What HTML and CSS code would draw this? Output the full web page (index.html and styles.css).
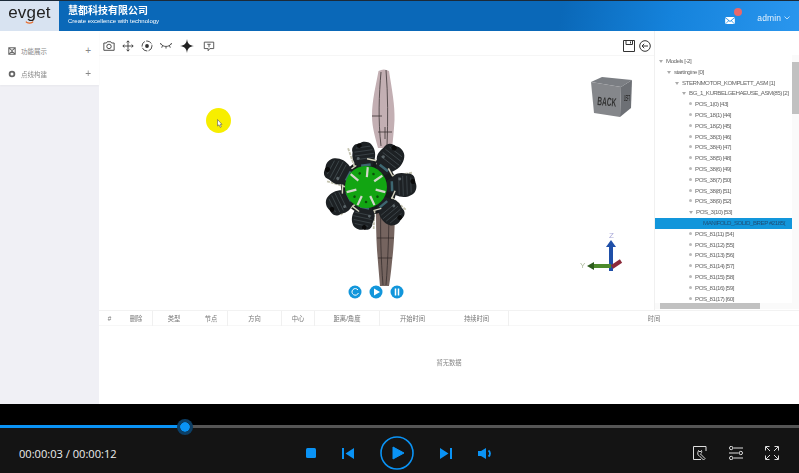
FILE: index.html
```html
<!DOCTYPE html>
<html lang="zh-CN">
<head>
    <meta charset="UTF-8">
    <meta name="viewport" content="width=device-width, initial-scale=1.0">
    <title>慧都科技有限公司</title>
    <link rel="stylesheet" href="styles.css">
</head>
<body>
    <header class="top-bar">
        <div class="logo-box">
            <span class="logo-text">evget</span>
            <svg class="logo-smile" viewBox="0 0 10 3"><path d="M1 .5C2.500 2.800 7.500 2.800 9 .5" fill="none" stroke="#e8641e" stroke-width="1.300"/></svg>
        </div>
        <div class="brand">
            <div class="brand-name">慧都科技有限公司</div>
            <div class="brand-sub">Create excellence with technology</div>
        </div>
        <div class="user-area">
            <div class="mail">
                <svg class="mail-icon" viewBox="0 0 11 8"><path d="M0 0H11L5.500 4.500Z M0 1.200V8L3.600 4Z M11 1.200V8L7.400 4Z M.6 8H10.400L6.800 4.700 5.500 5.800 4.200 4.700Z" fill="#fff"/></svg>
                <span class="badge"></span>
            </div>
            <span class="user-name">admin</span>
            <svg class="caret" viewBox="0 0 6 4"><path d="M.5 .5 3 3 5.500 .5" fill="none" stroke="#cfe6fa" stroke-width=".9"/></svg>
        </div>
    </header>

    <div class="app">
        <aside class="sidebar">
            <ul class="menu">
                <li class="menu-item">
                    <svg class="menu-icon" viewBox="0 0 10 10"><path d="M1 1H9V9H1Z M1 1 5 4.500 9 1 M1 9 5 5.500 9 9" fill="none" stroke="#666" stroke-width="1.300"/></svg>
                    <span class="menu-label">功能展示</span>
                    <span class="menu-plus">+</span>
                </li>
                <li class="menu-item">
                    <svg class="menu-icon" viewBox="0 0 10 10"><circle cx="5" cy="5" r="3" fill="none" stroke="#666" stroke-width="2.200"/></svg>
                    <span class="menu-label">点线构建</span>
                    <span class="menu-plus">+</span>
                </li>
            </ul>
        </aside>

        <main class="content">
            <div class="work-area">
                <section class="viewer">
                    <div class="toolbar">
                        <div class="tool-group">
                            <svg class="tool" viewBox="0 0 14 14"><path d="M1 3.500H4L5 2H9L10 3.500H13V12H1Z" fill="none" stroke="#333" stroke-width="1"/><circle cx="7" cy="7.500" r="2.600" fill="none" stroke="#333" stroke-width="1"/></svg>
                            <svg class="tool" viewBox="0 0 14 14"><path d="M7 1V13M1 7H13M5.300 2.800 7 1 8.700 2.800M5.300 11.200 7 13 8.700 11.200M2.800 5.300 1 7 2.800 8.700M11.200 5.300 13 7 11.200 8.700" fill="none" stroke="#333" stroke-width="1"/></svg>
                            <svg class="tool" viewBox="0 0 14 14"><circle cx="7" cy="7" r="5.800" fill="none" stroke="#333" stroke-width="1" stroke-dasharray="7 1.500"/><circle cx="7" cy="7" r="2.200" fill="#333"/></svg>
                            <svg class="tool" viewBox="0 0 14 14"><path d="M1 4.500C3.500 8.500 10.500 8.500 13 4.500M3 6.500 2 9M7 8V10M11 6.500 12 9M.5 5 1 3.500M13.500 5 13 3.500" fill="none" stroke="#333" stroke-width="1"/></svg>
                            <svg class="tool tool-star" viewBox="0 0 14 14"><path d="M7 0C7.500 4.500 9.500 6.500 14 7 9.500 7.500 7.500 9.500 7 14 6.500 9.500 4.500 7.500 0 7 4.500 6.500 6.500 4.500 7 0Z" fill="#222"/></svg>
                            <svg class="tool tool-note" viewBox="0 0 14 14"><path d="M1.500 2.500H12.500V10H8L6 12.500V10H1.500Z" fill="none" stroke="#444" stroke-width="1"/><path d="M5 5H9M7 5V8.500" fill="none" stroke="#444" stroke-width="1"/></svg>
                        </div>
                        <div class="tool-group-right">
                            <svg class="tool" viewBox="0 0 12 12"><path d="M.5 .5H11.500V11.500H.5Z" fill="none" stroke="#333" stroke-width="1"/><path d="M3 .5V4.500H9.500V.5M7.500 1.500V3.500" fill="none" stroke="#333" stroke-width="1"/></svg>
                            <svg class="tool" viewBox="0 0 12 12"><circle cx="6" cy="6" r="5.300" fill="none" stroke="#333" stroke-width="1"/><path d="M9 6H3M5.200 3.800 3 6 5.200 8.200" fill="none" stroke="#333" stroke-width="1"/></svg>
                        </div>
                    </div>

                    <svg class="scene" viewBox="100 56 554 252">
                        <defs>
                            <g id="cyl">
                                <path d="M-9 -24 C-14 -28 -13 -34 -12 -38 C-13 -44 -8 -47 -4 -46 C0 -49 7 -47 9 -43 C12 -38 12 -32 9 -26 L5 -18 H-6Z" fill="#1d2124"/>
                                <path d="M-8 -42H7M-10 -38H9M-10 -34H10M-9 -30H9" stroke="#3f484c" stroke-width=".8"/>
                                <path d="M-5 -23H5" stroke="#3d6670" stroke-width="2.500"/>
                                <path d="M-10 -24 L-18 -20" stroke="#d6d4c0" stroke-width="1.400"/>
                                <path d="M11 -22 L24 -36" stroke="#c4c3b0" stroke-width="1.800" stroke-dasharray="3 1"/>
                                <circle cx="-4" cy="-44" r="2.500" fill="#0a0a0a"/>
                                <circle cx="-7" cy="-31" r="1.500" fill="#5a6468"/>
                            </g>
                            <path id="spoke" d="M0 -10V-20" stroke="#d3d5cb" stroke-width="2.200"/>
                            <circle id="bolt" cx="0" cy="-15" r="1.300" fill="#0a4f0a"/>
                        </defs>

                        <!-- blades -->
                        <path d="M378.500 71 Q384 68 389 71 C392 90 395 105 394.500 120 C394 130 393 140 392 148 H378 C376 140 372 128 372 116 C372 100 376 85 378.500 71Z" fill="#c3afb3"/>
                        <path d="M381 72C379 95 378 120 381 146M386 70C388 95 388 120 387 146M372 116H382M378 132H392M385 127V139" stroke="#3a3234" stroke-width=".8" fill="none"/>
                        <path d="M376 204 H395 C395 225 394 245 392 262 C391 272 390 280 389 286 H380 C379 275 378 262 377 250 C376 235 376 220 376 204Z" fill="#75645f"/>
                        <path d="M381 206C380 230 381 260 383 285M389 206C389 230 388 260 386 285M377 238H394M378 258H392" stroke="#2e2726" stroke-width=".7" fill="none"/>

                        <!-- engine -->
                        <g transform="translate(369 187)">
                            <circle r="28" fill="#16191b"/>
                            <use href="#cyl" transform="rotate(-8) scale(.96)"/>
                            <use href="#cyl" transform="rotate(38) scale(1.050)"/>
                            <use href="#cyl" transform="rotate(88) scale(1)"/>
                            <use href="#cyl" transform="rotate(140) scale(.98)"/>
                            <use href="#cyl" transform="rotate(192) scale(.92)"/>
                            <use href="#cyl" transform="rotate(244) scale(.98)"/>
                            <use href="#cyl" transform="rotate(298) scale(1.020)"/>
                        </g>
                        <g transform="translate(366 187)">
                            <circle r="21" fill="#12a512"/>
                            <use href="#spoke" transform="rotate(5)"/>
                            <use href="#spoke" transform="rotate(55)"/>
                            <use href="#spoke" transform="rotate(105)"/>
                            <use href="#spoke" transform="rotate(155)"/>
                            <use href="#spoke" transform="rotate(205)"/>
                            <use href="#spoke" transform="rotate(255)"/>
                            <use href="#spoke" transform="rotate(310)"/>
                            <use href="#bolt" transform="rotate(30)"/>
                            <use href="#bolt" transform="rotate(130)"/>
                            <use href="#bolt" transform="rotate(180)"/>
                            <use href="#bolt" transform="rotate(230)"/>
                            <use href="#bolt" transform="rotate(335)"/>
                        </g>

                        <!-- view cube -->
                        <path d="M591 82 L602 77 L632 80 L621 87Z" fill="#7b7e83"/>
                        <path d="M591 82 L621 87 L620 117 L594 113Z" fill="#85878b"/>
                        <path d="M621 87 L632 80 L631 108 L620 117Z" fill="#6d7075"/>
                        <text class="cube-text" x="597" y="105" textLength="19" lengthAdjust="spacingAndGlyphs" transform="rotate(5 597 105)">BACK</text>
                        <text class="cube-side" x="624" y="101" textLength="6" lengthAdjust="spacingAndGlyphs">LEFT</text>

                        <!-- axes -->
                        <path d="M611 271V245" stroke="#1f4fa8" stroke-width="4"/>
                        <path d="M606 247 611 240 616 247Z" fill="#1f4fa8"/>
                        <path d="M611 266H592" stroke="#4c8a2c" stroke-width="4"/>
                        <path d="M594 262 587 266 594 270Z" fill="#2c5c1c"/>
                        <path d="M612 267 621 261" stroke="#8c2a3a" stroke-width="4"/>
                        <text class="axis-z" x="609" y="238">Z</text>
                        <text class="axis-y" x="580" y="268">Y</text>

                        <!-- play controls -->
                        <circle cx="355" cy="292" r="6.500" fill="#1296db"/>
                        <path d="M358 290A3.300 3.300 0 1 0 358.400 293" fill="none" stroke="#fff" stroke-width="1"/>
                        <circle cx="376" cy="292" r="6.500" fill="#1296db"/>
                        <path d="M374 288.500 380 292 374 295.500Z" fill="#fff"/>
                        <circle cx="397" cy="292" r="6.500" fill="#1296db"/>
                        <path d="M395.500 288.500V295.500M398.500 288.500V295.500" stroke="#fff" stroke-width="1.500"/>
                    </svg>

                    <div class="pointer-spot">
                        <svg class="pointer" viewBox="0 0 6 9"><path d="M.5 .5V7L2 5.800 3.200 8.300 4.300 7.800 3.200 5.400H5Z" fill="#fff" stroke="#555" stroke-width=".6"/></svg>
                    </div>
                </section>

                <aside class="tree-panel">
                    <div class="tree-body">
                        <ul class="tree">
                            <li class="row lv0"><i class="open"></i>Models [-2]</li>
                            <li class="row lv1"><i class="open"></i>startingine [0]</li>
                            <li class="row lv2"><i class="open"></i>STERNMOTOR_KOMPLETT_ASM [1]</li>
                            <li class="row lv3"><i class="open"></i>BG_1_KURBELGEHAEUSE_ASM(85) [2]</li>
                            <li class="row lv4"><i></i>POS_1(0) [43]</li>
                            <li class="row lv4"><i></i>POS_18(1) [44]</li>
                            <li class="row lv4"><i></i>POS_18(2) [45]</li>
                            <li class="row lv4"><i></i>POS_38(3) [46]</li>
                            <li class="row lv4"><i></i>POS_38(4) [47]</li>
                            <li class="row lv4"><i></i>POS_38(5) [48]</li>
                            <li class="row lv4"><i></i>POS_38(6) [49]</li>
                            <li class="row lv4"><i></i>POS_38(7) [50]</li>
                            <li class="row lv4"><i></i>POS_38(8) [51]</li>
                            <li class="row lv4"><i></i>POS_38(9) [52]</li>
                            <li class="row lv4"><i class="open"></i>POS_3(10) [53]</li>
                            <li class="row lv5 selected">MANIFOLD_SOLID_BREP #2185(</li>
                            <li class="row lv4"><i></i>POS_81(11) [54]</li>
                            <li class="row lv4"><i></i>POS_81(12) [55]</li>
                            <li class="row lv4"><i></i>POS_81(13) [56]</li>
                            <li class="row lv4"><i></i>POS_81(14) [57]</li>
                            <li class="row lv4"><i></i>POS_81(15) [58]</li>
                            <li class="row lv4"><i></i>POS_81(16) [59]</li>
                            <li class="row lv4"><i></i>POS_81(17) [60]</li>
                        </ul>
                        <div class="v-scroll">
                            <span class="v-thumb"></span>
                        </div>
                    </div>
                    <div class="h-scroll">
                        <span class="h-thumb"></span>
                    </div>
                </aside>
            </div>

            <section class="steps">
                <div class="steps-head">
                    <span class="cell">#</span>
                    <span class="cell sep">删除</span>
                    <span class="cell">类型</span>
                    <span class="cell sep">节点</span>
                    <span class="cell sep">方向</span>
                    <span class="cell sep">中心</span>
                    <span class="cell sep">距离/角度</span>
                    <span class="cell">开始时间</span>
                    <span class="cell sep">持续时间</span>
                    <span class="cell">时间</span>
                </div>
                <div class="steps-empty">暂无数据</div>
            </section>
        </main>
    </div>

    <footer class="player">
        <div class="player-gap"></div>
        <div class="progress">
            <span class="progress-done"></span>
            <span class="progress-knob"></span>
        </div>
        <div class="controls">
            <span class="time">00:00:03 / 00:00:12</span>
            <div class="transport">
                <svg class="ctl-stop" viewBox="0 0 10 10"><rect width="10" height="10" rx="1.500" fill="#0a93f5"/></svg>
                <svg class="ctl-skip" viewBox="0 0 12 11"><path d="M0 0H2V11H0ZM12 0V11L3.500 5.500Z" fill="#0a93f5"/></svg>
                <svg class="ctl-play" viewBox="0 0 34 34"><circle cx="17" cy="17" r="16" fill="none" stroke="#0a93f5" stroke-width="1.600"/><path d="M13 11 24 17 13 23Z" fill="#0a93f5" stroke="#0a93f5" stroke-linejoin="round"/></svg>
                <svg class="ctl-skip" viewBox="0 0 12 11"><path d="M12 0H10V11H12ZM0 0V11L8.500 5.500Z" fill="#0a93f5"/></svg>
                <svg class="ctl-vol" viewBox="0 0 14 11"><path d="M0 3H3L8 0V11L3 8H0Z" fill="#0a93f5"/><path d="M10.500 2.500C12.500 4 12.500 7 10.500 8.500" fill="none" stroke="#0a93f5" stroke-width="1.800"/></svg>
            </div>
            <div class="tools">
                <svg class="ctl-tool" viewBox="0 0 14 14"><path d="M13 5V.5H.5V13.500H8" fill="none" stroke="#ddd" stroke-width="1"/><path d="M5.500 4.500 7 6 8.500 4.500C9 6 8.500 7.500 7.500 8L12 12.500 10.500 14 6 9.500C5 9.500 4 8 5.500 4.500Z" fill="none" stroke="#ddd" stroke-width="1"/></svg>
                <svg class="ctl-tool" viewBox="0 0 14 14"><path d="M4.500 2H14M0 7H9.500M4.500 12H14" stroke="#ddd" stroke-width="1"/><circle cx="2.200" cy="2" r="1.700" fill="none" stroke="#ddd"/><circle cx="11.800" cy="7" r="1.700" fill="none" stroke="#ddd"/><circle cx="2.200" cy="12" r="1.700" fill="none" stroke="#ddd"/></svg>
                <svg class="ctl-tool" viewBox="0 0 14 14"><path d="M.5 4.500V.5H4.500M9.500 .5H13.500V4.500M13.500 9.500V13.500H9.500M4.500 13.500H.5V9.500M1 1 5 5M13 1 9 5M13 13 9 9M1 13 5 9" fill="none" stroke="#ddd" stroke-width="1"/></svg>
            </div>
        </div>
    </footer>
</body>
</html>
```

FILE: styles.css
```css
* {
    box-sizing: border-box;
}

body {
    margin: 0;
    height: 473px;
    overflow: hidden;
    display: flex;
    flex-direction: column;
    font-family: "Liberation Sans", "Noto Sans CJK SC", sans-serif;
    background-color: #fff;
}

ul {
    list-style: none;
    margin: 0;
    padding: 0;
}

svg {
    display: block;
}

/* header */
.top-bar {
    display: flex;
    height: 31px;
    border-top: 1px solid #1c2a38;
    background: linear-gradient(100deg, #0a68b8 0%, #0a68b8 70%, #1583dc 84%, #2a96ee 100%);
    color: #fff;
    filter: blur(.3px);
}

.logo-box {
    width: 59px;
    background-color: #d8e3f1;
    display: flex;
    flex-direction: column;
    align-items: center;
    padding-top: 3px;
}

.logo-text {
    font-size: 17px;
    line-height: 17px;
    color: #222;
    letter-spacing: .2px;
}

.logo-smile {
    width: 9px;
    height: 3px;
}

.brand {
    padding: 3px 0 0 9px;
}

.brand-name {
    font-size: 10px;
    line-height: 13px;
    font-weight: bold;
}

.brand-sub {
    font-size: 6px;
    line-height: 8px;
}

.user-area {
    margin-left: auto;
    display: flex;
    align-items: center;
    padding: 3px 9px 0 0;
}

.mail {
    position: relative;
    margin-right: 22px;
    padding-top: 5px;
}

.mail-icon {
    width: 10px;
    height: 7px;
}

.badge {
    position: absolute;
    top: -4px;
    left: 9px;
    width: 8px;
    height: 8px;
    border-radius: 50%;
    background-color: #e9686a;
}

.user-name {
    font-size: 8.500px;
    color: #e6f2fc;
    letter-spacing: .1px;
}

.caret {
    width: 6px;
    height: 4px;
    margin-left: 3px;
}

/* page body */
.app {
    flex: 1;
    display: flex;
    min-height: 0;
    filter: blur(.3px);
}

.sidebar {
    width: 99px;
    background-color: #f0f0f5;
}

.menu {
    background-color: #fff;
    padding-top: 8px;
    height: 54px;
    box-shadow: 0 1px 2px rgba(0, 0, 0, .04);
}

.menu-item {
    display: flex;
    align-items: center;
    height: 23px;
    padding-left: 8px;
    color: #888;
}

.menu-icon {
    width: 8px;
    height: 8px;
    margin-right: 5px;
}

.menu-label {
    font-size: 6.500px;
}

.menu-plus {
    margin-left: auto;
    margin-right: 8px;
    font-size: 10px;
    line-height: 10px;
    font-weight: normal;
}

.content {
    flex: 1;
    min-width: 0;
    display: flex;
    flex-direction: column;
}

.work-area {
    height: 279px;
    display: flex;
}

/* 3d view */
.viewer {
    position: relative;
    flex: 1;
    min-width: 0;
    display: flex;
    flex-direction: column;
}

.toolbar {
    height: 25px;
    flex-shrink: 0;
    display: flex;
    justify-content: space-between;
    align-items: center;
    padding: 6px 3px 0 4px;
    border-bottom: 1px solid #f6f6f6;
}

.tool-group {
    display: flex;
    align-items: center;
    gap: 7px;
}

.tool-group-right {
    display: flex;
    align-items: center;
    gap: 4px;
}

.tool {
    width: 12px;
    height: 12px;
}

.tool-star {
    width: 14px;
    height: 14px;
    margin-left: 1px;
}

.tool-note {
    margin-left: 2px;
}

.scene {
    position: absolute;
    left: 1px;
    top: 25px;
    width: 554px;
    height: 252px;
}

.cube-text {
    font-size: 12px;
    font-weight: bold;
    fill: #333;
}

.cube-side {
    font-size: 9px;
    font-weight: bold;
    fill: #333;
}

.axis-z {
    font-size: 8px;
    fill: #a8a8d8;
}

.axis-y {
    font-size: 8px;
    fill: #aab89a;
}

.pointer-spot {
    position: absolute;
    left: 107px;
    top: 77px;
    width: 25px;
    height: 25px;
    border-radius: 50%;
    background-color: #f7ee00;
    display: flex;
    align-items: center;
    justify-content: center;
}

.pointer {
    width: 6px;
    height: 9px;
    margin: 5px 0 0 2px;
}

/* model tree */
.tree-panel {
    width: 145px;
    border-left: 1px solid #f0f0f0;
    display: flex;
    flex-direction: column;
    padding-top: 24px;
}

.tree-body {
    flex: 1;
    min-height: 0;
    display: flex;
}

.tree {
    flex: 1;
    min-width: 0;
    padding-top: 1px;
    overflow: hidden;
}

.row {
    height: 10.800px;
    line-height: 10.800px;
    font-size: 6.200px;
    letter-spacing: -.5px;
    color: #666;
    white-space: nowrap;
    overflow: hidden;
}

.row i {
    display: inline-block;
    width: 3px;
    height: 3px;
    margin-right: 3px;
    vertical-align: 1px;
    border-radius: 50%;
    background-color: #bbb;
}

.row i.open {
    border-radius: 0;
    background: none;
    border-left: 2px solid transparent;
    border-right: 2px solid transparent;
    border-top: 3px solid #aaa;
    width: 4px;
    height: 3px;
    vertical-align: 0;
}

.lv0 {
    padding-left: 4px;
}

.lv1 {
    padding-left: 12px;
}

.lv2 {
    padding-left: 20px;
}

.lv3 {
    padding-left: 27px;
}

.lv4 {
    padding-left: 34px;
}

.lv5 {
    padding-left: 48px;
}

.selected {
    background-color: #1296db;
    color: #1d4f78;
}

.v-scroll {
    width: 7px;
    background-color: #fafafa;
    padding-top: 7px;
}

.v-thumb {
    display: block;
    width: 7px;
    height: 52px;
    background-color: #c1c1c1;
}

.h-scroll {
    height: 6px;
    margin-bottom: 1px;
    background-color: #fafafa;
    padding-left: 5px;
}

.h-thumb {
    display: block;
    width: 100px;
    height: 6px;
    background-color: #c1c1c1;
}

/* steps table */
.steps {
    flex: 1;
    min-height: 0;
    border-top: 1px solid #f2f2f2;
}

.steps-head {
    display: grid;
    grid-template-columns: 21px 33px 42px 33px 54px 33px 65px 65px 64px 1fr;
    height: 15px;
    border-bottom: 1px solid #f7f7f7;
}

.cell {
    font-size: 6.300px;
    line-height: 15px;
    text-align: center;
    color: #777;
}

.sep {
    border-right: 1px solid #f0f0f0;
}

.steps-empty {
    margin-top: 32px;
    font-size: 6.300px;
    line-height: 10px;
    text-align: center;
    color: #888;
}

/* video player */
.player {
    height: 69px;
    flex-shrink: 0;
    display: flex;
    flex-direction: column;
    background-color: #000;
}

.player-gap {
    height: 21px;
}

.progress {
    position: relative;
    height: 3px;
    background-color: #555;
}

.progress-done {
    display: block;
    width: 185px;
    height: 3px;
    background-color: #0a93f5;
}

.progress-knob {
    position: absolute;
    left: 177px;
    top: -6px;
    width: 16px;
    height: 16px;
    border-radius: 50%;
    background-color: #0a93f5;
    background-clip: content-box;
    padding: 3px;
    box-shadow: inset 0 0 0 3px #0c3f66;
}

.controls {
    flex: 1;
    display: grid;
    grid-template-columns: 1fr auto 1fr;
    align-items: center;
    padding: 5px 20px 0 19px;
    background-color: #141414;
}

.time {
    font-family: "Open Sans", "Liberation Sans", sans-serif;
    font-size: 11.100px;
    color: #eee;
}

.transport {
    display: flex;
    align-items: center;
    gap: 26px;
}

.ctl-stop {
    width: 10px;
    height: 10px;
}

.ctl-skip {
    width: 12px;
    height: 11px;
}

.ctl-play {
    width: 34px;
    height: 34px;
}

.ctl-vol {
    width: 14px;
    height: 11px;
}

.tools {
    display: flex;
    justify-content: flex-end;
    gap: 22px;
}

.ctl-tool {
    width: 14px;
    height: 14px;
}
```
